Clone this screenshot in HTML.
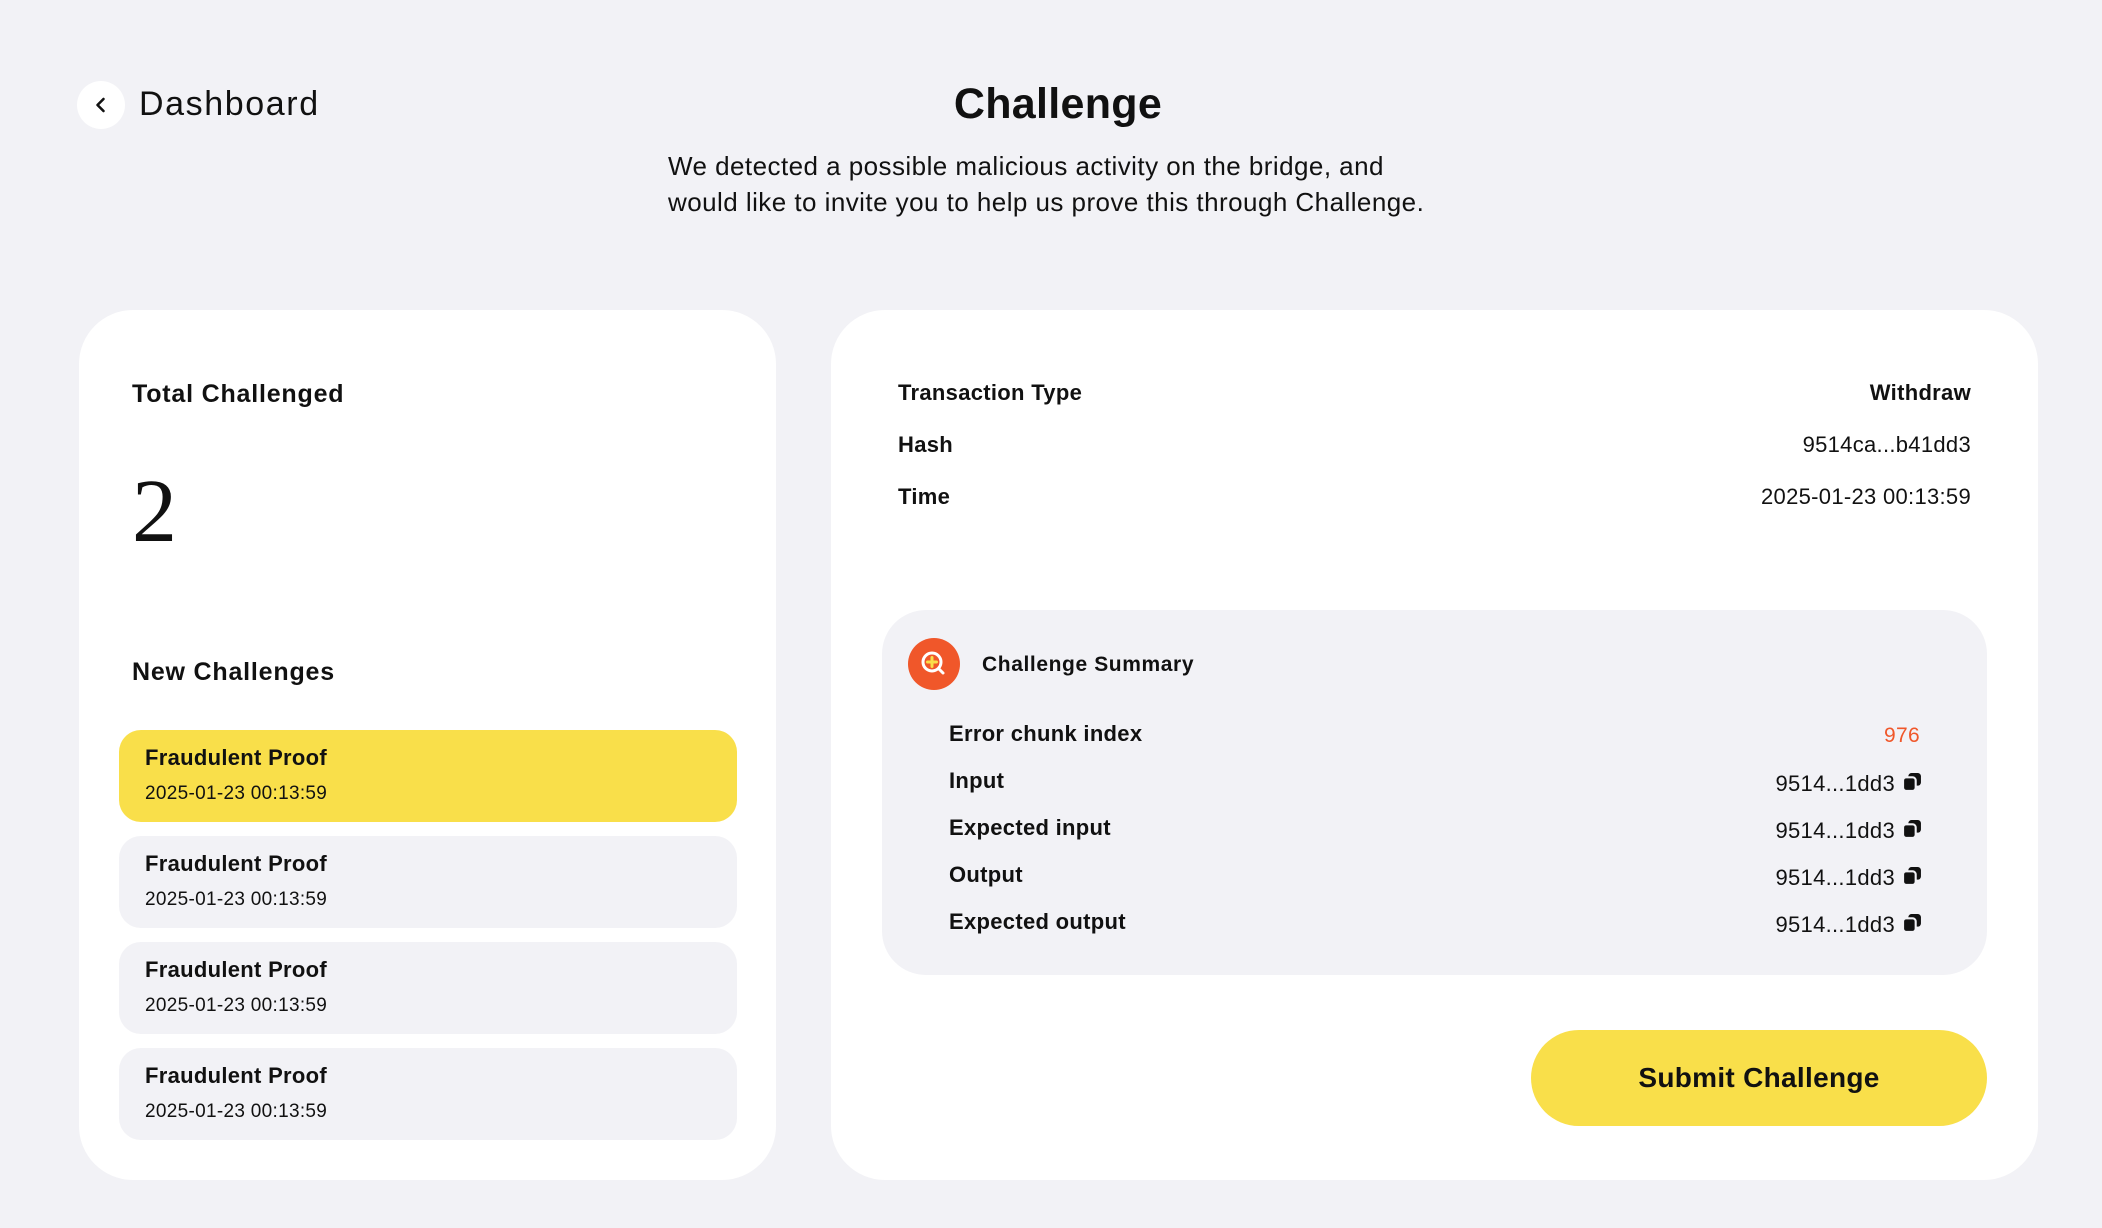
<!DOCTYPE html>
<html><head><meta charset="utf-8"><style>
*{margin:0;padding:0;box-sizing:border-box}
body{width:2102px;height:1228px;background:#f2f2f6;font-family:"Liberation Sans",sans-serif;color:#111;position:relative;overflow:hidden;letter-spacing:0.3px}
.a{position:absolute;white-space:nowrap}
.card{position:absolute;background:#fff;border-radius:54px}
.item{position:absolute;left:119px;width:618px;height:92px;border-radius:22px;background:#f2f2f6}
.item .t{position:absolute;left:26px;top:15px;font-size:22px;font-weight:bold}
.item .d{position:absolute;left:26px;top:53px;font-size:19px}
.lbl{font-size:22px;font-weight:bold}
.val{font-size:22px;text-align:right}
.cp{display:inline-block;vertical-align:-1px;margin-left:7px}
</style></head><body>
<div class="a" style="left:77px;top:81px;width:48px;height:48px;border-radius:50%;background:#fff"></div>
<svg class="a" style="left:91px;top:95px" width="20" height="20" viewBox="0 0 20 20"><path d="M12.5 4 L6.5 10 L12.5 16" stroke="#111" stroke-width="2.6" fill="none" stroke-linecap="round" stroke-linejoin="round"/></svg>
<div class="a" style="left:139px;top:85px;font-size:34px;letter-spacing:1.6px">Dashboard</div>
<div class="a" style="left:0;width:2116px;text-align:center;top:80px;font-size:43px;font-weight:bold">Challenge</div>
<div class="a" style="left:668px;top:148px;font-size:26px;line-height:36px;letter-spacing:0.45px">We detected a possible malicious activity on the bridge, and<br>would like to invite you to help us prove this through Challenge.</div>

<div class="card" style="left:79px;top:310px;width:697px;height:870px"></div>
<div class="a" style="left:132px;top:380px;font-size:25px;font-weight:bold;letter-spacing:0.8px">Total Challenged</div>
<div class="a" style="left:132px;top:460px;font-size:90px;font-family:'Liberation Serif',serif">2</div>
<div class="a" style="left:132px;top:658px;font-size:25px;font-weight:bold;letter-spacing:0.8px">New Challenges</div>
<div class="item" style="top:730px;background:#f9df4a"><div class="t">Fraudulent Proof</div><div class="d">2025-01-23 00:13:59</div></div>
<div class="item" style="top:836px"><div class="t">Fraudulent Proof</div><div class="d">2025-01-23 00:13:59</div></div>
<div class="item" style="top:942px"><div class="t">Fraudulent Proof</div><div class="d">2025-01-23 00:13:59</div></div>
<div class="item" style="top:1048px"><div class="t">Fraudulent Proof</div><div class="d">2025-01-23 00:13:59</div></div>

<div class="card" style="left:831px;top:310px;width:1207px;height:870px"></div>
<div class="a lbl" style="left:898px;top:380px">Transaction Type</div>
<div class="a lbl" style="right:131px;top:380px">Withdraw</div>
<div class="a lbl" style="left:898px;top:432px">Hash</div>
<div class="a val" style="right:131px;top:432px">9514ca...b41dd3</div>
<div class="a lbl" style="left:898px;top:484px">Time</div>
<div class="a val" style="right:131px;top:484px">2025-01-23 00:13:59</div>

<div class="a" style="left:882px;top:610px;width:1105px;height:365px;border-radius:44px;background:#f2f2f6"></div>
<svg class="a" style="left:908px;top:638px" width="52" height="52" viewBox="0 0 52 52"><circle cx="26" cy="26" r="26" fill="#f0572a"/><circle cx="24" cy="24" r="9" stroke="#fff" stroke-width="3" fill="none"/><path d="M30.5 30.5 L35 35" stroke="#fff" stroke-width="3" stroke-linecap="round"/><path d="M24 19.5v9M19.5 24h9" stroke="#f9df4a" stroke-width="3" stroke-linecap="round"/></svg>
<div class="a" style="left:982px;top:653px;font-size:21px;font-weight:bold;letter-spacing:0.6px">Challenge Summary</div>

<div class="a lbl" style="left:949px;top:721px">Error chunk index</div>
<div class="a val" style="right:182px;top:724px;color:#f0572a;font-size:21px">976</div>
<div class="a lbl" style="left:949px;top:768px">Input</div>
<div class="a lbl" style="left:949px;top:815px">Expected input</div>
<div class="a lbl" style="left:949px;top:862px">Output</div>
<div class="a lbl" style="left:949px;top:909px">Expected output</div>
<div class="a val" style="right:180px;top:771px">9514...1dd3<svg class="cp" width="20" height="20" viewBox="0 0 19 19"><rect x="6" y="1" width="12" height="12" rx="3" fill="#111"/><rect x="1" y="5" width="12" height="13" rx="3" fill="#111" stroke="#f2f2f6" stroke-width="2"/></svg></div>
<div class="a val" style="right:180px;top:818px">9514...1dd3<svg class="cp" width="20" height="20" viewBox="0 0 19 19"><rect x="6" y="1" width="12" height="12" rx="3" fill="#111"/><rect x="1" y="5" width="12" height="13" rx="3" fill="#111" stroke="#f2f2f6" stroke-width="2"/></svg></div>
<div class="a val" style="right:180px;top:865px">9514...1dd3<svg class="cp" width="20" height="20" viewBox="0 0 19 19"><rect x="6" y="1" width="12" height="12" rx="3" fill="#111"/><rect x="1" y="5" width="12" height="13" rx="3" fill="#111" stroke="#f2f2f6" stroke-width="2"/></svg></div>
<div class="a val" style="right:180px;top:912px">9514...1dd3<svg class="cp" width="20" height="20" viewBox="0 0 19 19"><rect x="6" y="1" width="12" height="12" rx="3" fill="#111"/><rect x="1" y="5" width="12" height="13" rx="3" fill="#111" stroke="#f2f2f6" stroke-width="2"/></svg></div>

<div class="a" style="left:1531px;top:1030px;width:456px;height:96px;border-radius:48px;background:#f9df4a;text-align:center;line-height:96px;font-size:28px;font-weight:bold">Submit Challenge</div>
</body></html>
